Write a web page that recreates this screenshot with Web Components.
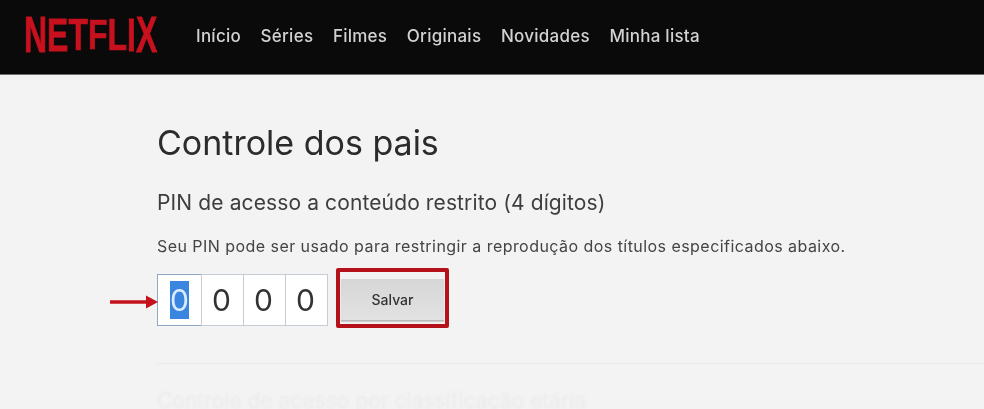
<!DOCTYPE html>
<html lang="pt-BR">
<head>
<meta charset="utf-8">
<title>Controle dos pais</title>
<style>
	html, body { margin: 0; height: 100%; overflow: hidden; }
	body { background: #f3f3f3; font-family: Inter, "Liberation Sans", sans-serif; }
</style>
</head>
<body>
<nf-header>
	<nf-link>Início</nf-link>
	<nf-link>Séries</nf-link>
	<nf-link>Filmes</nf-link>
	<nf-link>Originais</nf-link>
	<nf-link>Novidades</nf-link>
	<nf-link>Minha lista</nf-link>
</nf-header>
<nf-page>
	<h1 slot="title">Controle dos pais</h1>
	<h2 slot="subtitle">PIN de acesso a conteúdo restrito (4 dígitos)</h2>
	<p slot="text">Seu PIN pode ser usado para restringir a reprodução dos títulos especificados abaixo.</p>
	<nf-pin slot="form"></nf-pin>
	<span slot="next">Controle de acesso por classificação etária</span>
</nf-page>
<script>
class NfHeader extends HTMLElement {
	constructor() {
		super();
		this.attachShadow({ mode: 'open' });
		// logo letters get their own height, that gives the arc of the wordmark
		const arc = [1, .94, .88, .85, .88, .94, 1];
		const letters = [...'NETFLIX'].map((c, i) => `<i style="transform: scaleY(${arc[i]})">${c}</i>`).join('');
		this.shadowRoot.innerHTML = `
			<style>
				:host {
					display: flex;
					align-items: center;
					box-sizing: border-box;
					height: 75px;
					padding: 0 0 4px 24px;
					background: #0a0a0a;
					border-bottom: 1px solid #6f6f6f;
				}
				.logo {
					flex: none;
					width: 134px;
					height: 38px;
					filter: blur(.5px);
				}
				.logo span {
					display: inline-block;
					color: #c8111e;
					font: 700 50px/38px "Liberation Sans", sans-serif;
					-webkit-text-stroke: .8px #c8111e;
					white-space: nowrap;
					transform: scaleX(.64);
					transform-origin: 0 50%;
				}
				.logo i { display: inline-block; font-style: normal; }
				nav { display: flex; gap: 19.6px; margin-left: 38px; margin-top: 2px; filter: blur(.3px); }
			</style>
			<div class="logo"><span>${letters}</span></div>
			<nav><slot></slot></nav>
		`;
	}
}

class NfLink extends HTMLElement {
	constructor() {
		super();
		this.attachShadow({ mode: 'open' });
		this.shadowRoot.innerHTML = `
			<style>
				:host {
					display: block;
					color: #d2d2d2;
					font-size: 17px;
					font-weight: 500;
					letter-spacing: .25px;
					line-height: 20px;
					white-space: nowrap;
				}
			</style>
			<slot></slot>
		`;
	}
}

class NfPage extends HTMLElement {
	constructor() {
		super();
		this.attachShadow({ mode: 'open' });
		this.shadowRoot.innerHTML = `
			<style>
				:host {
					display: block;
					padding: 47px 0 0 157px;
					filter: blur(.3px);
				}
				::slotted(h1) {
					margin: 0;
					color: #2b2b2b;
					font-size: 34px;
					font-weight: 400;
					line-height: 42px;
				}
				::slotted(h2) {
					margin: 27px 0 0;
					color: #3e3e3e;
					font-size: 21px;
					font-weight: 400;
					letter-spacing: .12px;
					line-height: 24px;
				}
				::slotted(p) {
					margin: 21px 0 0;
					color: #444;
					font-size: 16px;
					font-weight: 400;
					letter-spacing: .45px;
					line-height: 20px;
					white-space: nowrap;
				}
				.rule { height: 1px; margin-top: 35px; background: #e8e8e8; }
				.next { margin-top: 25px; color: #ebebeb; font-size: 21px; line-height: 24px; filter: blur(1px); white-space: nowrap; }
			</style>
			<slot name="title"></slot>
			<slot name="subtitle"></slot>
			<slot name="text"></slot>
			<slot name="form"></slot>
			<div class="rule"></div>
			<div class="next"><slot name="next"></slot></div>
		`;
	}
}

class NfPin extends HTMLElement {
	constructor() {
		super();
		this.attachShadow({ mode: 'open' });
		this.shadowRoot.innerHTML = `
			<style>
				:host {
					display: flex;
					align-items: flex-start;
					gap: 8px;
					position: relative;
					margin-top: 12px;
					color: #333;
				}
				.fields { display: flex; margin-top: 6px; }
				.field {
					display: flex;
					align-items: center;
					justify-content: center;
					box-sizing: border-box;
					width: 43px;
					height: 52px;
					margin-left: -1px;
					padding-right: 2px;
					background: #fff;
					border: 1px solid #c5ccd5;
					font-size: 30px;
				}
				.field:first-child { width: 45px; margin-left: 0; padding-right: 0; border: 1.5px solid #8ea7c4; }
				.sel { width: 19px; background: #3a85e0; color: #dcecff; line-height: 38px; text-align: center; }
				.mark {
					box-sizing: border-box;
					width: 113px;
					height: 60px;
					padding: 7px 1px 3px;
					border: 4px solid #b5111b;
					border-radius: 2px;
				}
				.mark button {
					display: block;
					width: 100%;
					height: 42px;
					padding: 0;
					border: 0;
					border-bottom: 1px solid #b8b8b8;
					background: linear-gradient(#d6d6d6, #e2e2e2);
					box-shadow: 0 1px 1px rgba(0,0,0,.15);
					color: #333;
					font: 500 14px Inter, "Liberation Sans", sans-serif;
				}
				svg { position: absolute; left: -47px; top: 26px; }
			</style>
			<div class="fields">
				<div class="field"><span class="sel">0</span></div>
				<div class="field">0</div>
				<div class="field">0</div>
				<div class="field">0</div>
			</div>
			<div class="mark"><button>Salvar</button></div>
			<svg width="48" height="16" viewBox="0 0 48 16">
				<path d="M0 8H38" stroke="#c4121d" stroke-width="3.5"/>
				<path d="M36 1.5 48 8 36 14.5Z" fill="#c4121d"/>
			</svg>
		`;
	}
}

customElements.define('nf-header', NfHeader);
customElements.define('nf-link', NfLink);
customElements.define('nf-page', NfPage);
customElements.define('nf-pin', NfPin);
</script>
</body>
</html>
